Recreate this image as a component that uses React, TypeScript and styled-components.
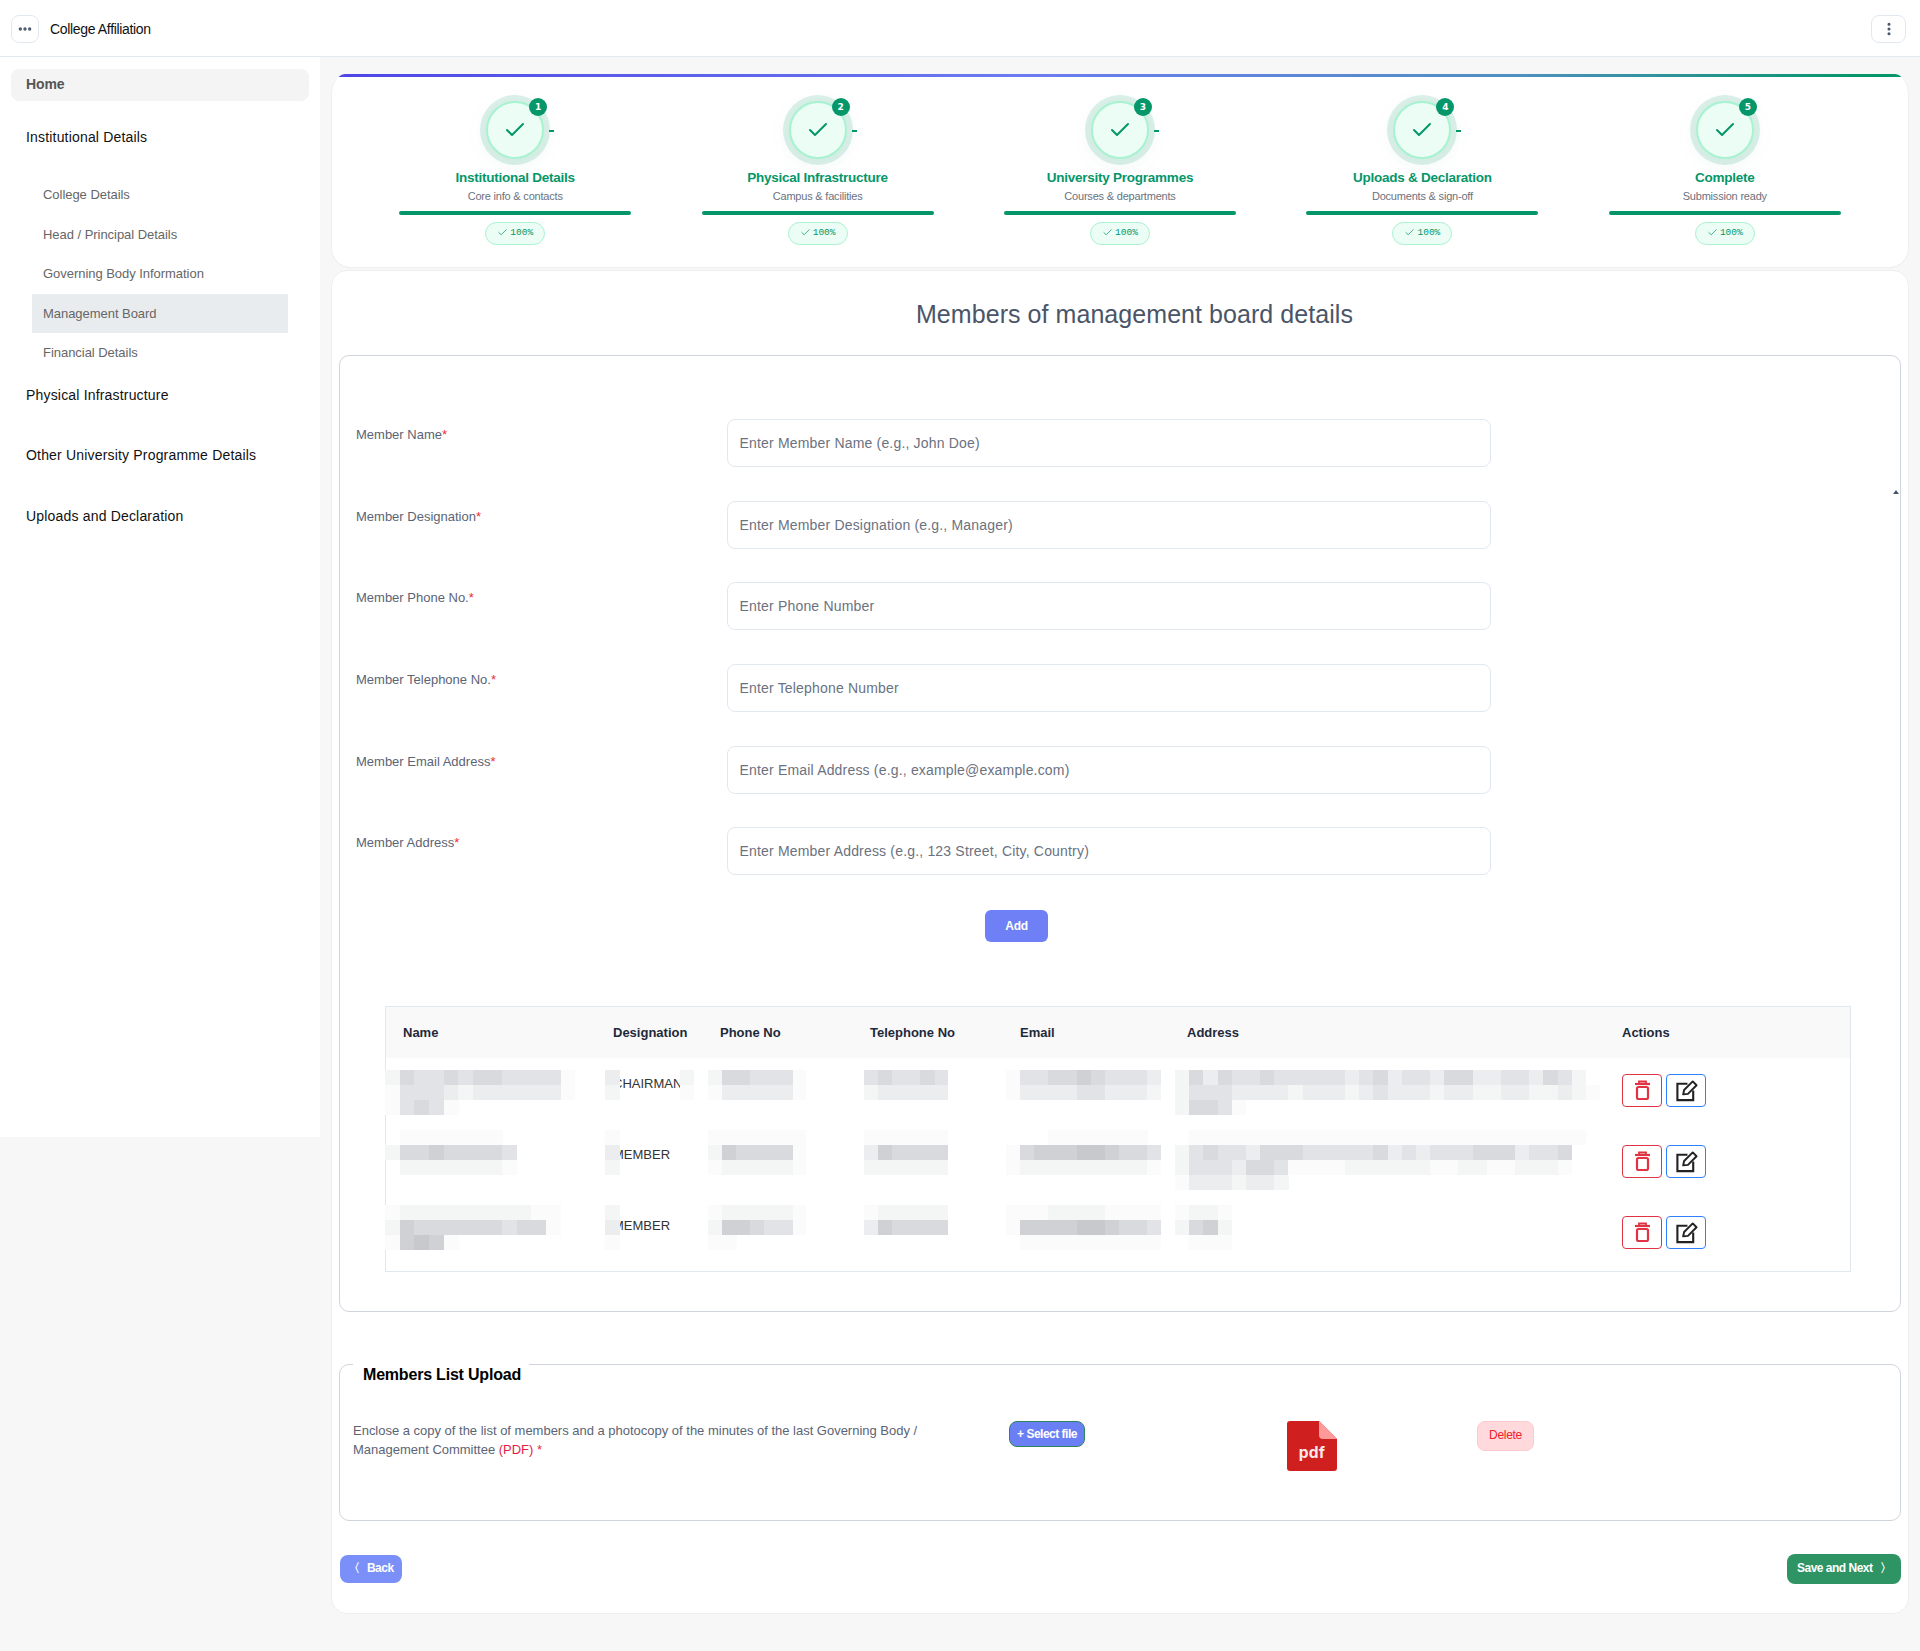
import React from "react";
import styled, { createGlobalStyle } from "styled-components";
import { Check, Ellipsis, EllipsisVertical } from "lucide-react";

const Global = createGlobalStyle`
  html, body { margin: 0; padding: 0; background: #f7f7f7; }
  body { font-family: "Liberation Sans", Arial, sans-serif; }
  * { box-sizing: border-box; }
  input::placeholder { color: #6b7280; opacity: 1; }
`;

const Page = styled.div`
  width: 1920px;
  height: 1651px;
  overflow: hidden;
`;
const TopBar = styled.header`
  height: 57px;
  background: #fff;
  border-bottom: 1px solid #e2e8f0;
  display: flex;
  align-items: center;
  padding: 0 14px 0 11px;
`;
const IconBox = styled.button<{ $w: number }>`
  width: ${(p) => p.$w}px;
  height: 28px;
  margin-top: 2px;
  padding: 0;
  background: #fff;
  border: 1px solid #e2e8f0;
  border-radius: 8px;
  color: #475569;
  display: flex;
  align-items: center;
  justify-content: center;
`;
const AppTitle = styled.div`
  margin-left: 11px;
  margin-top: 1px;
  flex: 1;
  font-size: 14px;
  font-weight: 500;
  letter-spacing: -0.34px;
  color: #111;
`;
const Body = styled.div`
  display: flex;
  align-items: flex-start;
`;
const Sidebar = styled.nav`
  width: 320px;
  height: 1080px;
  flex: none;
  background: #fff;
  padding: 12px 11px 0;
`;
const HomeItem = styled.div`
  height: 32px;
  line-height: 30px;
  padding-left: 15px;
  background: #f4f4f4;
  border-radius: 8px;
  font-size: 14px;
  font-weight: 700;
  letter-spacing: -0.1px;
  color: #555;
`;
const TopItem = styled.div<{ $mt: number }>`
  margin-top: ${(p) => p.$mt}px;
  padding-left: 15px;
  height: 20px;
  line-height: 20px;
  font-size: 14px;
  letter-spacing: 0.18px;
  color: #111;
`;
const SubList = styled.div`
  margin: 28px 0 12px 21px;
  width: 256px;
`;
const SubItem = styled.div<{ $active?: boolean }>`
  height: 39.5px;
  line-height: 39.5px;
  padding-left: 11px;
  font-size: 13px;
  letter-spacing: -0.04px;
  color: #666;
  background: ${(p) => (p.$active ? "#e9ecef" : "transparent")};
`;
const Main = styled.main`
  flex: 1;
  padding: 17px 11px 0 11px;
  display: flex;
  flex-direction: column;
  gap: 2px;
`;
const StepCard = styled.section`
  height: 194px;
  background: #fff;
  border: 1px solid #eeeff1;
  border-top: 0;
  border-radius: 14px 14px 20px 20px / 22px 22px 20px 20px;
  overflow: hidden;
`;
const Rainbow = styled.div`
  height: 3px;
  background: linear-gradient(90deg, #4f46e5 0%, #6b7cf0 45%, #4f90c0 75%, #059669 97%);
`;
const Steps = styled.div`
  display: grid;
  grid-template-columns: repeat(5, 1fr);
  padding: 0 32px;
`;
const Step = styled.div`
  display: flex;
  flex-direction: column;
  align-items: center;
  padding-top: 24px;
`;
const Circle = styled.div`
  position: relative;
  width: 58px;
  height: 58px;
  border-radius: 50%;
  background: #ecfdf5;
  border: 2px solid #a7f3d0;
  box-shadow: 0 0 0 6px rgba(5, 150, 105, 0.14), 0 4px 22px rgba(5, 150, 105, 0.08);
  color: #059669;
  display: flex;
  align-items: center;
  justify-content: center;
`;
const Badge = styled.span`
  position: absolute;
  top: -5px;
  right: -5px;
  width: 18px;
  height: 18px;
  border-radius: 50%;
  background: #059669;
  color: #fff;
  font: 700 9px/18px "DejaVu Sans", sans-serif;
  text-align: center;
`;
const Dash = styled.span`
  position: absolute;
  left: 61px;
  top: 27px;
  width: 5px;
  height: 2px;
  background: #059669;
`;
const StepName = styled.div`
  margin-top: 11px;
  font-size: 13.5px;
  line-height: 16px;
  font-weight: 700;
  letter-spacing: -0.25px;
  color: #059669;
`;
const StepSub = styled.div`
  margin-top: 3px;
  font-size: 11px;
  line-height: 14px;
  letter-spacing: -0.2px;
  color: #6b7280;
`;
const Track = styled.div`
  margin-top: 8px;
  width: 232px;
  height: 4px;
  border-radius: 2px;
  background: #059669;
`;
const Pill = styled.div`
  margin-top: 7px;
  height: 23px;
  padding: 0 11px 3px 11px;
  display: flex;
  align-items: center;
  gap: 2px;
  background: #ecfdf5;
  border: 1px solid #a7f3d0;
  border-radius: 12px;
  color: #059669;
  font: 400 9.5px "Liberation Mono", monospace;
`;
const FormCard = styled.section`
  background: #fff;
  border: 1px solid #eeeff1;
  border-radius: 16px;
  padding: 28px 7px 29px 7px;
  height: 1344px;
`;
const FormTitle = styled.h1`
  margin: 0;
  padding-left: 29px;
  text-align: center;
  font-size: 25px;
  line-height: 30px;
  font-weight: 400;
  letter-spacing: 0.06px;
  color: #4a5568;
`;
const Box = styled.div`
  position: relative;
  margin-top: 26px;
  height: 957px;
  border: 1px solid #d0d4dc;
  border-radius: 10px;
  padding: 63px 16px 0;
`;
const Caret = styled.span`
  position: absolute;
  top: 134px;
  right: 1px;
  width: 0;
  height: 0;
  border-left: 3px solid transparent;
  border-right: 3px solid transparent;
  border-bottom: 4px solid #475569;
`;
const FormGrid = styled.div`
  display: grid;
  grid-template-columns: 371px 764px;
  row-gap: 33.7px;
`;
const Label = styled.label`
  padding-top: 8px;
  font-size: 13px;
  line-height: 16px;
  color: #5b6475;
`;
const Req = styled.span`
  color: #ef2b3a;
`;
const Field = styled.input`
  height: 48px;
  width: 100%;
  padding: 0 11.5px;
  border: 1px solid #e2e8f0;
  border-radius: 8px;
  background: #fff;
  font: 14px "Liberation Sans", Arial, sans-serif;
  letter-spacing: 0.18px;
`;
const AddBtn = styled.button`
  display: block;
  margin: 34.5px 0 0 629px;
  width: 63px;
  height: 32px;
  border: 0;
  border-radius: 6px;
  background: #6f80f7;
  color: #fff;
  font: 700 12px "Liberation Sans", Arial, sans-serif;
  letter-spacing: -0.3px;
`;
const Table = styled.div`
  margin: 64px 0 0 29px;
  width: 1466px;
  height: 266px;
  border: 1px solid #e2e8f0;
`;
const Head = styled.div`
  height: 51px;
  background: #f9f9f9;
  display: grid;
  grid-template-columns: 210px 107px 150px 150px 167px 435px 1fr;
`;
const Th = styled.div`
  padding-left: 17px;
  line-height: 52px;
  font-size: 13px;
  font-weight: 700;
  color: #1e293b;
`;
const Row = styled.div`
  height: 71px;
  display: grid;
  grid-template-columns: 211px 107px 150px 150px 167px 435px 1fr;
  margin-left: -1px;
`;
const Cell = styled.div`
  display: flex;
  align-items: flex-start;
  min-width: 0;
`;
const MosaicSvg = styled.svg<{ $ml: number; $mt: number }>`
  display: block;
  flex: none;
  margin-left: ${(p) => p.$ml}px;
  margin-top: ${(p) => p.$mt}px;
`;
const Clip = styled.div`
  flex: none;
  width: 60px;
  overflow: hidden;
  margin-top: 18px;
  font-size: 13px;
  line-height: 16px;
  white-space: nowrap;
  color: #333;
`;
const ClipText = styled.span`
  display: block;
  margin-left: -7px;
`;
const Actions = styled.div`
  display: flex;
  gap: 4px;
  padding: 16px 0 0 17px;
`;
const ActBtn = styled.button<{ $c: string }>`
  width: 40px;
  height: 33px;
  padding: 0;
  background: #fff;
  border: 1px solid ${(p) => p.$c};
  border-radius: 4px;
  display: flex;
  align-items: center;
  justify-content: center;
`;
const UploadBox = styled.div`
  position: relative;
  margin-top: 52px;
  height: 157px;
  border: 1px solid #d0d4dc;
  border-radius: 10px;
  padding: 56px 0 0 13px;
  display: grid;
  grid-template-columns: 656px 278px 190px auto;
  align-items: start;
`;
const Legend = styled.div`
  position: absolute;
  top: -1px;
  left: 13px;
  padding: 0 8px 0 10px;
  background: #fff;
  font-size: 16px;
  line-height: 21px;
  font-weight: 700;
  letter-spacing: -0.2px;
  color: #000;
`;
const Notice = styled.div`
  width: 580px;
  margin-top: -0.5px;
  font-size: 13px;
  line-height: 19px;
  letter-spacing: -0.01px;
  color: #5b6475;
`;
const Pdf = styled.span`
  color: #e11d48;
`;
const SelectBtn = styled.button`
  width: 76px;
  height: 26px;
  padding: 0;
  border: 1px solid #2f855a;
  border-radius: 8px;
  background: #6b7ff5;
  color: #fff;
  font: 700 12px "Liberation Sans", Arial, sans-serif;
  letter-spacing: -0.5px;
`;
const DeleteBtn = styled.button`
  width: 57px;
  height: 30px;
  padding: 0 0 2px;
  border: 1px solid #ffc9ce;
  border-radius: 8px;
  background: #ffd9dc;
  color: #f0202a;
  font: 12px "Liberation Sans", Arial, sans-serif;
  letter-spacing: -0.3px;
`;
const NavRow = styled.div`
  margin: 33px 0 0 1px;
  display: flex;
  justify-content: space-between;
  align-items: center;
`;
const NavBtn = styled.button<{ $bg: string; $w: number; $h: number }>`
  width: ${(p) => p.$w}px;
  height: ${(p) => p.$h}px;
  padding: 0 0 2px;
  border: 0;
  border-radius: 8px;
  background: ${(p) => p.$bg};
  color: #fff;
  font: 700 12px "Liberation Sans", Arial, sans-serif;
  letter-spacing: -0.5px;
  display: flex;
  align-items: center;
  justify-content: center;
  gap: 7px;
`;

const shades: Record<string, string> = {
  "0": "#fbfbfb",
  "1": "#f4f5f5",
  "2": "#ecedef",
  "3": "#e2e3e6",
  "4": "#d9dade",
  "5": "#d0d1d5",
  "6": "#c8c9cd",
};

const Mosaic = ({ data, cw, ml = 0, mt = 0 }: { data: string[]; cw: number; ml?: number; mt?: number }) => {
  const n = Math.max(...data.map((r) => r.length));
  return (
    <MosaicSvg $ml={ml} $mt={mt} width={n * cw} height={data.length * 15} shapeRendering="crispEdges">
      {data.map((r, y) =>
        r.split("").map((c, x) =>
          shades[c] ? <rect key={`${x}-${y}`} x={x * cw} y={y * 15} width={cw + 0.5} height={15} fill={shades[c]} /> : null
        )
      )}
    </MosaicSvg>
  );
};

const Trash = () => (
  <svg width="17" height="20" viewBox="0 0 17 20" fill="none" stroke="#e03444" strokeWidth="2.2">
    <path d="M1 4H16" />
    <path d="M5 3.5V1.5H12V3.5" strokeWidth="1.8" />
    <rect x="3" y="7" width="11" height="12" rx="1.5" />
  </svg>
);

const EditIcon = () => (
  <svg width="23" height="23" viewBox="0 0 24 24" fill="none" stroke="#222" strokeWidth="2.2">
    <path d="M13 5H2.5V22H19V12" />
    <path d="M8.5 16L9.5 11.5L18.5 2.5L22.5 6.5L13.5 15.5Z" strokeWidth="2" strokeLinejoin="round" />
  </svg>
);

const PdfIcon = () => (
  <svg width="50" height="50" viewBox="0 0 50 50">
    <path d="M3 0H32L50 18V47a3 3 0 0 1-3 3H3a3 3 0 0 1-3-3V3a3 3 0 0 1 3-3Z" fill="#d01f1f" />
    <path d="M32 0L50 18H36a4 4 0 0 1-4-4Z" fill="#ff9a9a" />
    <text x="25" y="36.5" textAnchor="middle" fill="#fbe9e9" fontFamily="Inter, sans-serif" fontWeight="700" fontSize="15.5" letterSpacing="0.3">
      pdf
    </text>
  </svg>
);

const steps = [
  ["Institutional Details", "Core info & contacts"],
  ["Physical Infrastructure", "Campus & facilities"],
  ["University Programmes", "Courses & departments"],
  ["Uploads & Declaration", "Documents & sign-off"],
  ["Complete", "Submission ready"],
];

const fields = [
  ["Member Name", "Enter Member Name (e.g., John Doe)"],
  ["Member Designation", "Enter Member Designation (e.g., Manager)"],
  ["Member Phone No.", "Enter Phone Number"],
  ["Member Telephone No.", "Enter Telephone Number"],
  ["Member Email Address", "Enter Email Address (e.g., example@example.com)"],
  ["Member Address", "Enter Member Address (e.g., 123 Street, City, Country)"],
];

const rows = [
  {
    top: 12,
    text: "CHAIRMAN",
    name: ["1433434433330", "0333212222220", "03430"],
    desL: ["2", "1"],
    desR: ["1", "0"],
    phone: ["1443330", "0222220"],
    tel: ["343343", "122222"],
    email: ["03344543332", "02222332221"],
    addr: ["14243343333323423324422332431", "133322221222123222122112211210", "14430"],
  },
  {
    top: 1,
    text: "MEMBER",
    name: [".0000000.", "144544443", ".11111110"],
    desL: ["0", "2", "1"],
    desR: [],
    phone: ["0000000", "1544440", "0111110"],
    tel: ["000000", "254444", "111111"],
    email: ["...0000000.", "04555665443", "01111111110"],
    addr: [".0000000000000000000000000000", "1343324443333342323334442334", "1333244300001111110011001110", "02221221"],
  },
  {
    top: 5,
    text: "MEMBER",
    name: ["011111111100", "154444443440", "05650"],
    desL: ["1", "2", "0"],
    desR: [],
    phone: ["0111110", "1554330", "00"],
    tel: ["011111", "254444"],
    email: ["00011110000", "05555665443", ".0000000000"],
    addr: ["0110", "1451", ".000"],
  },
];

export default function App() {
  return (
    <Page>
      <Global />
      <TopBar>
        <IconBox $w={28}>
          <Ellipsis size={16} strokeWidth={3} />
        </IconBox>
        <AppTitle>College Affiliation</AppTitle>
        <IconBox $w={35}>
          <EllipsisVertical size={16} strokeWidth={2.6} />
        </IconBox>
      </TopBar>
      <Body>
        <Sidebar>
          <HomeItem>Home</HomeItem>
          <TopItem $mt={26}>Institutional Details</TopItem>
          <SubList>
            <SubItem>College Details</SubItem>
            <SubItem>Head / Principal Details</SubItem>
            <SubItem>Governing Body Information</SubItem>
            <SubItem $active>Management Board</SubItem>
            <SubItem>Financial Details</SubItem>
          </SubList>
          <TopItem $mt={0}>Physical Infrastructure</TopItem>
          <TopItem $mt={40}>Other University Programme Details</TopItem>
          <TopItem $mt={41}>Uploads and Declaration</TopItem>
        </Sidebar>
        <Main>
          <StepCard>
            <Rainbow />
            <Steps>
              {steps.map(([a, b], i) => (
                <Step key={a}>
                  <Circle>
                    <Check size={24} strokeWidth={2} />
                    <Badge>{i + 1}</Badge>
                    {i < 4 && <Dash />}
                  </Circle>
                  <StepName>{a}</StepName>
                  <StepSub>{b}</StepSub>
                  <Track />
                  <Pill>
                    <Check size={11} strokeWidth={1.6} />
                    100%
                  </Pill>
                </Step>
              ))}
            </Steps>
          </StepCard>
          <FormCard>
            <FormTitle>Members of management board details</FormTitle>
            <Box>
              <Caret />
              <FormGrid>
                {fields.map(([l, p]) => (
                  <React.Fragment key={l}>
                    <Label>
                      {l}
                      <Req>*</Req>
                    </Label>
                    <Field placeholder={p} />
                  </React.Fragment>
                ))}
              </FormGrid>
              <AddBtn>Add</AddBtn>
              <Table>
                <Head>
                  {["Name", "Designation", "Phone No", "Telephone No", "Email", "Address", "Actions"].map((h) => (
                    <Th key={h}>{h}</Th>
                  ))}
                </Head>
                {rows.map((r, i) => (
                  <Row key={i}>
                    <Cell>
                      <Mosaic data={r.name} cw={14.64} mt={r.top} />
                    </Cell>
                    <Cell>
                      <Mosaic data={r.desL} cw={15} ml={9} mt={r.top} />
                      <Clip>
                        <ClipText>{r.text}</ClipText>
                      </Clip>
                      {r.desR.length > 0 && <Mosaic data={r.desR} cw={14} mt={r.top} />}
                    </Cell>
                    <Cell>
                      <Mosaic data={r.phone} cw={14.1} ml={4.5} mt={r.top} />
                    </Cell>
                    <Cell>
                      <Mosaic data={r.tel} cw={14.1} ml={10.5} mt={r.top} />
                    </Cell>
                    <Cell>
                      <Mosaic data={r.email} cw={14.1} ml={2.5} mt={r.top} />
                    </Cell>
                    <Cell>
                      <Mosaic data={r.addr} cw={14.17} ml={5} mt={r.top} />
                    </Cell>
                    <Actions>
                      <ActBtn $c="#e03444">
                        <Trash />
                      </ActBtn>
                      <ActBtn $c="#2f80ff">
                        <EditIcon />
                      </ActBtn>
                    </Actions>
                  </Row>
                ))}
              </Table>
            </Box>
            <UploadBox>
              <Legend>Members List Upload</Legend>
              <Notice>
                Enclose a copy of the list of members and a photocopy of the minutes of the last Governing Body / Management Committee{" "}
                <Pdf>(PDF)</Pdf> <Req>*</Req>
              </Notice>
              <div>
                <SelectBtn>+ Select file</SelectBtn>
              </div>
              <div>
                <PdfIcon />
              </div>
              <div>
                <DeleteBtn>Delete</DeleteBtn>
              </div>
            </UploadBox>
            <NavRow>
              <NavBtn $bg="#7b8ff8" $w={62} $h={28}>
                <span>〈</span>
                <span>Back</span>
              </NavBtn>
              <NavBtn $bg="#2e9464" $w={114} $h={30}>
                <span>Save and Next</span>
                <span>〉</span>
              </NavBtn>
            </NavRow>
          </FormCard>
        </Main>
      </Body>
    </Page>
  );
}
